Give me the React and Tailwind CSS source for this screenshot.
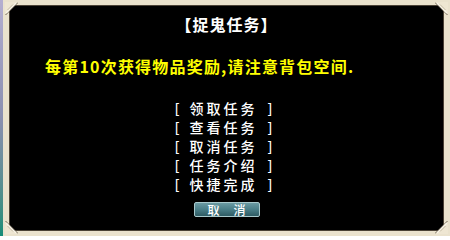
import React from 'react';

const menuItems = ["领取任务", "查看任务", "取消任务", "任务介绍", "快捷完成"];

const Corner = ({className}) => (
    <svg className={"absolute w-[13px] h-[13px] " + className} viewBox="0 0 13 13">
        <polygon points="0,0 13,0 0,13" fill="#eee6d2"/>
        <line x1="13" y1="0.5" x2="0.5" y2="13" stroke="#6e6454" strokeWidth="1"/>
        <line x1="11" y1="1.2" x2="1.2" y2="11" stroke="#fbf7ec" strokeWidth="1.2"/>
        <line x1="8" y1="2.5" x2="2.5" y2="8" stroke="#b8ad97" strokeWidth="0.8"/>
    </svg>
);

const App = () => {
    return (
        <div className="w-[450px] h-[236px] flex bg-black overflow-hidden"
             style={{fontFamily: '"Noto Sans CJK SC", "Noto Sans", sans-serif'}}>
            {/* bit of the game scene showing on the left */}
            <div className="w-[3px] h-full bg-gradient-to-b from-[#b4aed0] via-[#8a8fb0] to-[#138c78]"/>

            <div className="relative flex-1 border-l-[6px] border-r-[6px] border-t-[5px] border-b-[5px] border-[#eae2cd]">
                <div className="h-full border border-[#4b4236] flex flex-col items-center">
                    <div className="mt-[8px] leading-5 text-[16px] font-bold text-white tracking-[1px]">
                        【捉鬼任务】
                    </div>

                    <div className="self-start ml-[35px] mt-[22px] leading-5 text-[16px] font-bold text-[#ffff00] tracking-[1.2px]">
                        每第10次获得物品奖励,请注意背包空间.
                    </div>

                    <div className="mt-[23px] mr-[6px] flex flex-col text-[14px] font-medium text-white leading-[19px]">
                        {menuItems.map((item) => (
                            <div key={item} className="flex cursor-pointer">
                                <span className="w-[15px]">[</span>
                                <span className="w-[78px] tracking-[3px]">{item}</span>
                                <span>]</span>
                            </div>
                        ))}
                    </div>

                    <button
                        className="mt-[8px] w-[66px] h-[15px] flex items-center justify-center gap-[14px] rounded-[2px] border border-[#a9c9cc] bg-gradient-to-b from-[#6a9aa2] via-[#4a7e87] to-[#2e5b63] text-white text-[12px] font-medium leading-none">
                        <span>取</span>
                        <span>消</span>
                    </button>
                </div>

                <Corner className="-top-[3px] -left-[4px]"/>
                <Corner className="-top-[3px] -right-[4px] -scale-x-100"/>
                <Corner className="-bottom-[3px] -left-[4px] -scale-y-100"/>
                <Corner className="-bottom-[3px] -right-[4px] -scale-x-100 -scale-y-100"/>
            </div>
        </div>
    );
};

export default App;
